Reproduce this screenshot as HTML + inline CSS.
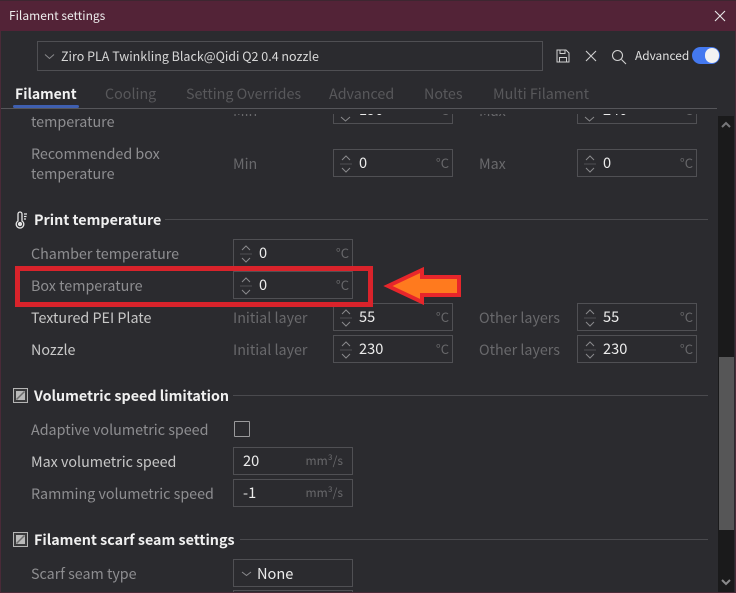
<!DOCTYPE html>
<html><head><meta charset="utf-8">
<style>
html,body{margin:0;padding:0;background:#2b2b2f}
#w{position:relative;width:736px;height:593px;overflow:hidden;background:#2b2b2f;font-family:"Noto Sans CJK SC","Liberation Sans",sans-serif;font-size:14.3px;color:#8f8f92}
#w div,#w span.t{position:absolute;white-space:nowrap}
.t{line-height:20px;height:20px}
.g{color:#8e8e91}
.d{color:#58585b}
.m{color:#69696c}
.w{color:#e8e8e8}
.h{color:#f0f0f0;font-weight:700}
.f{border:1px solid #505054;box-sizing:border-box;height:28px;width:120px}
.u{color:#68686b;font-size:13px;line-height:16px;top:5px;right:3px}
.mm{color:#68686b;font-size:12px;line-height:16px;top:5px;right:9px}
.v{color:#ececec;font-size:14.6px;line-height:20px;top:3px}
.line{height:1px;background:#4a4a4e}
svg{position:absolute;overflow:visible}
</style></head>
<body><div id="w">

<div style="left:0;top:0;width:736px;height:31px;background:#532337"></div>
<div style="left:0;top:0;width:736px;height:1px;background:#3d2630"></div>
<div class="t" style="left:9px;top:6px;color:#eee;font-size:12px">Filament settings</div>
<svg style="left:714px;top:10px" width="12" height="12"><path d="M1 1L11 11M11 1L1 11" stroke="#e8e8e8" stroke-width="1.1" fill="none"/></svg>

<div style="left:37px;top:41px;width:506px;height:30px;box-sizing:border-box;border:1px solid #4f4f53"></div>
<svg style="left:44px;top:53px" width="12" height="8"><path d="M1 1.500L5.500 5.500L10 1.500" stroke="#8a8a8d" fill="none"/></svg>
<div class="t" style="left:61px;top:46px;color:#d8d8d8;font-size:12.500px">Ziro PLA Twinkling Black@Qidi Q2 0.4 nozzle</div>

<svg style="left:556px;top:49px" width="14" height="14" fill="none" stroke="#d0d0d0" stroke-width="1"><path d="M1 1H10L13 4V13H1ZM4 1V4.500H9V1M3.500 13V8.500H10.500V13"/></svg>
<svg style="left:585px;top:50px" width="12" height="12"><path d="M1 1L11 11M11 1L1 11" stroke="#d0d0d0" stroke-width="1.100" fill="none"/></svg>
<svg style="left:611px;top:49px" width="16" height="16" fill="none" stroke="#d0d0d0" stroke-width="1.100"><circle cx="6.500" cy="6.500" r="5"/><path d="M10.500 10.500L15 15"/></svg>
<div class="t" style="left:635px;top:46px;color:#e0e0e0;font-size:11.900px">Advanced</div>
<div style="left:692px;top:47px;width:28px;height:17px;border-radius:9px;background:#4479f0"></div>
<div style="left:705px;top:48px;width:14px;height:15px;border-radius:8px;background:#f2f2f2"></div>

<div class="t h" style="left:15px;top:84px;font-size:14px;color:#f2f2f2">Filament</div>
<div style="left:13px;top:105px;width:66px;height:3px;border-radius:2px;background:#3f5fb0"></div>
<div class="t d" style="left:105px;top:84px">Cooling</div>
<div class="t d" style="left:186px;top:84px">Setting Overrides</div>
<div class="t d" style="left:329px;top:84px">Advanced</div>
<div class="t d" style="left:424px;top:84px">Notes</div>
<div class="t d" style="left:493px;top:84px">Multi Filament</div>

<div style="left:0;top:114px;width:717px;height:20px;overflow:hidden">
 <div class="t g" style="left:31px;top:-2px">temperature</div>
 <div class="t m" style="left:233px;top:-13px">Min</div>
 <div class="t m" style="left:479px;top:-13px">Max</div>
 <div class="f" style="left:333px;top:-18px"><svg style="left:5px;top:19px" width="14" height="6"><path d="M2 1L6.500 5L11 1" stroke="#8a8a8d" fill="none"/></svg><span class="v" style="position:absolute;left:25px">190</span><span class="u" style="position:absolute">°C</span></div>
 <div class="f" style="left:577px;top:-18px"><svg style="left:5px;top:19px" width="14" height="6"><path d="M2 1L6.500 5L11 1" stroke="#8a8a8d" fill="none"/></svg><span class="v" style="position:absolute;left:25px">240</span><span class="u" style="position:absolute">°C</span></div>
</div>
<div style="left:0;top:108px;width:717px;height:1px;background:#56565a"></div>

<div class="t g" style="left:31px;top:144px">Recommended box</div>
<div class="t g" style="left:31px;top:164px">temperature</div>
<div class="t m" style="left:233px;top:154px">Min</div>
<div class="f" style="left:333px;top:149px">
 <svg style="left:4px;top:3px" width="16" height="22" fill="none" stroke="#8a8a8d"><path d="M4 7L8 3L12 7M4 15L8 19L12 15"/><path d="M2 11H14" stroke="#4f4f53"/></svg>
 <span class="v" style="position:absolute;left:25px">0</span><span class="u" style="position:absolute">°C</span></div>
<div class="t m" style="left:479px;top:154px">Max</div>
<div class="f" style="left:577px;top:149px">
 <svg style="left:4px;top:3px" width="16" height="22" fill="none" stroke="#8a8a8d"><path d="M4 7L8 3L12 7M4 15L8 19L12 15"/><path d="M2 11H14" stroke="#4f4f53"/></svg>
 <span class="v" style="position:absolute;left:25px">0</span><span class="u" style="position:absolute">°C</span></div>

<svg style="left:15px;top:211px" width="14" height="18" fill="none" stroke="#e6e6e6" stroke-width="1.300"><path d="M3 3a2 2 0 0 1 4 0V10a3.800 3.800 0 1 1-4 0Z"/><circle cx="5" cy="13" r="1.500" fill="#e6e6e6"/><path d="M9 3H12M9 5.500H11.500M9 8H11"/></svg>
<div class="t h" style="left:34px;top:210px">Print temperature</div>
<div class="line" style="left:165px;top:219px;width:543px"></div>

<div class="t g" style="left:31px;top:244px">Chamber temperature</div>
<div class="f" style="left:233px;top:239px">
 <svg style="left:4px;top:3px" width="16" height="22" fill="none" stroke="#8a8a8d"><path d="M4 7L8 3L12 7M4 15L8 19L12 15"/><path d="M2 11H14" stroke="#4f4f53"/></svg>
 <span class="v" style="position:absolute;left:25px">0</span><span class="u" style="position:absolute">°C</span></div>

<div class="t g" style="left:31px;top:276px">Box temperature</div>
<div class="f" style="left:233px;top:271px">
 <svg style="left:4px;top:3px" width="16" height="22" fill="none" stroke="#8a8a8d"><path d="M4 7L8 3L12 7M4 15L8 19L12 15"/><path d="M2 11H14" stroke="#4f4f53"/></svg>
 <span class="v" style="position:absolute;left:25px">0</span><span class="u" style="position:absolute">°C</span></div>

<div class="t" style="left:31px;top:308px;color:#c8c8c8">Textured PEI Plate</div>
<div class="t m" style="left:233px;top:308px">Initial layer</div>
<div class="f" style="left:333px;top:303px">
 <svg style="left:4px;top:3px" width="16" height="22" fill="none" stroke="#8a8a8d"><path d="M4 7L8 3L12 7M4 15L8 19L12 15"/><path d="M2 11H14" stroke="#4f4f53"/></svg>
 <span class="v" style="position:absolute;left:25px">55</span><span class="u" style="position:absolute">°C</span></div>
<div class="t m" style="left:479px;top:308px">Other layers</div>
<div class="f" style="left:577px;top:303px">
 <svg style="left:4px;top:3px" width="16" height="22" fill="none" stroke="#8a8a8d"><path d="M4 7L8 3L12 7M4 15L8 19L12 15"/><path d="M2 11H14" stroke="#4f4f53"/></svg>
 <span class="v" style="position:absolute;left:25px">55</span><span class="u" style="position:absolute">°C</span></div>

<div class="t" style="left:31px;top:340px;color:#c8c8c8">Nozzle</div>
<div class="t m" style="left:233px;top:340px">Initial layer</div>
<div class="f" style="left:333px;top:335px">
 <svg style="left:4px;top:3px" width="16" height="22" fill="none" stroke="#8a8a8d"><path d="M4 7L8 3L12 7M4 15L8 19L12 15"/><path d="M2 11H14" stroke="#4f4f53"/></svg>
 <span class="v" style="position:absolute;left:25px">230</span><span class="u" style="position:absolute">°C</span></div>
<div class="t m" style="left:479px;top:340px">Other layers</div>
<div class="f" style="left:577px;top:335px">
 <svg style="left:4px;top:3px" width="16" height="22" fill="none" stroke="#8a8a8d"><path d="M4 7L8 3L12 7M4 15L8 19L12 15"/><path d="M2 11H14" stroke="#4f4f53"/></svg>
 <span class="v" style="position:absolute;left:25px">230</span><span class="u" style="position:absolute">°C</span></div>

<svg style="left:13px;top:388px" width="15" height="15"><rect x=".5" y=".5" width="14" height="14" fill="#3a3a3c" stroke="#b5b5b5"/><rect x="3" y="3" width="9" height="9" fill="#b9b9b9"/><path d="M3.500 11.500L11.500 3.500" stroke="#6d6d6d" stroke-width="1.500"/></svg>
<div class="t h" style="left:34px;top:386px">Volumetric speed limitation</div>
<div class="line" style="left:233px;top:395px;width:475px"></div>

<div class="t g" style="left:31px;top:420px">Adaptive volumetric speed</div>
<div style="left:234px;top:421px;width:16px;height:16px;box-sizing:border-box;border:1px solid #9a9a9c;border-radius:1px"></div>

<div class="t" style="left:31px;top:452px;color:#c8c8c8">Max volumetric speed</div>
<div class="f" style="left:233px;top:447px"><span class="v" style="position:absolute;left:9px">20</span><span class="mm" style="position:absolute">mm³/s</span></div>
<div class="t g" style="left:31px;top:484px">Ramming volumetric speed</div>
<div class="f" style="left:233px;top:479px"><span class="v" style="position:absolute;left:9px">-1</span><span class="mm" style="position:absolute">mm³/s</span></div>

<svg style="left:13px;top:532px" width="15" height="15"><rect x=".5" y=".5" width="14" height="14" fill="#3a3a3c" stroke="#b5b5b5"/><rect x="3" y="3" width="9" height="9" fill="#b9b9b9"/><path d="M3.500 11.500L11.500 3.500" stroke="#6d6d6d" stroke-width="1.500"/></svg>
<div class="t h" style="left:34px;top:530px">Filament scarf seam settings</div>
<div class="line" style="left:240px;top:539px;width:468px"></div>

<div class="t g" style="left:31px;top:564px">Scarf seam type</div>
<div class="f" style="left:233px;top:559px">
 <svg style="left:7px;top:11px" width="12" height="7"><path d="M1 1L5.500 4.500L10 1" stroke="#8a8a8d" fill="none"/></svg>
 <span class="v" style="position:absolute;left:23px;top:4px">None</span></div>
<div class="f" style="left:233px;top:590px"></div>

<div style="left:718px;top:116px;width:16px;height:477px;background:#1a1a1b"></div>
<div style="left:719px;top:357px;width:15px;height:173px;background:#565657"></div>
<svg style="left:720px;top:120px" width="12" height="9"><path d="M2 7L6 3L10 7" stroke="#77777a" stroke-width="2" fill="none"/></svg>
<svg style="left:720px;top:578px" width="12" height="9"><path d="M2 2L6 6L10 2" stroke="#8a8a8c" stroke-width="2" fill="none"/></svg>

<div style="left:0;top:31px;width:1px;height:562px;background:#4a2a38"></div>
<div style="left:735px;top:31px;width:1px;height:562px;background:#4a2a38"></div>
<div style="left:0;top:592px;width:736px;height:1px;background:#4a2a38"></div>

<div style="left:15px;top:266px;width:358px;height:41px;box-sizing:border-box;border:5px solid #d9232b"></div>
<svg style="left:0;top:0" width="736" height="593"><path d="M388 286L422 270V277H459V295H422V302Z" fill="#ff7a1e" stroke="#e7262b" stroke-width="4" stroke-linejoin="miter"/></svg>

</div></body></html>
